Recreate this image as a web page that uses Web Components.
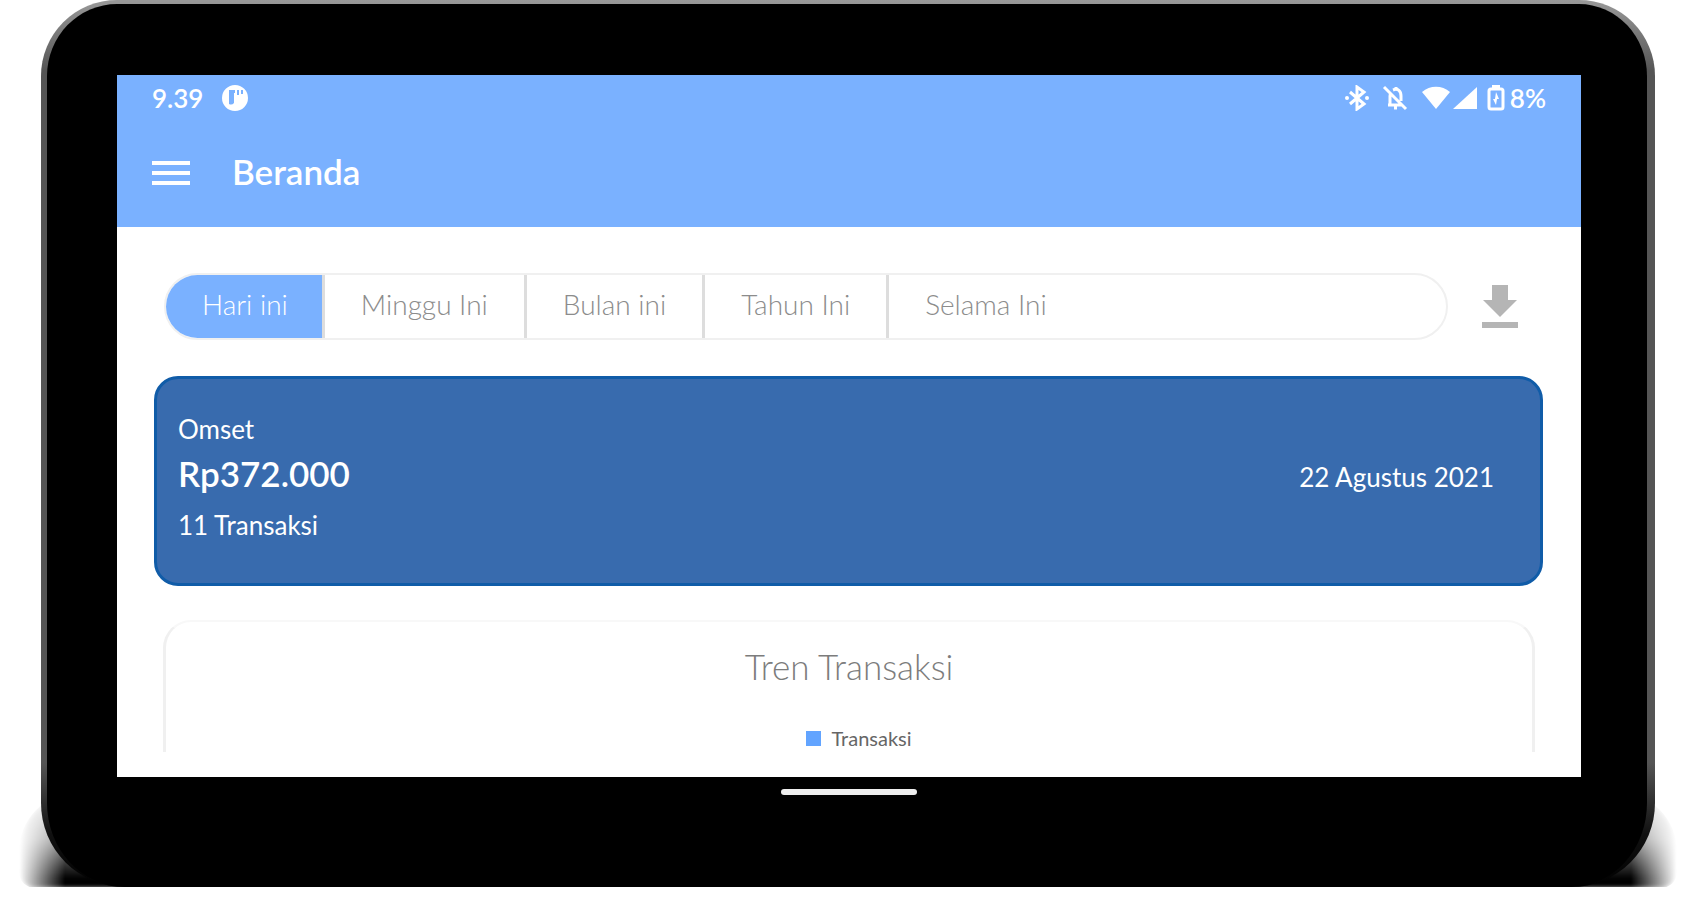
<!DOCTYPE html>
<html lang="id">
<head>
<meta charset="utf-8">
<meta name="viewport" content="width=device-width, initial-scale=1">
<title>Beranda</title>
<style>
  body {
    margin: 0;
    background: #fff;
    font-family: Lato, "Open Sans", sans-serif;
  }
</style>
</head>
<body>
<device-frame>
  <status-bar slot="header" time="9.39" battery="8%"></status-bar>
  <app-bar slot="header">Beranda</app-bar>
  <period-filter></period-filter>
  <revenue-card>
    <span slot="label">Omset</span>
    <span slot="amount">Rp372.000</span>
    <span slot="count">11 Transaksi</span>
    <span slot="date">22 Agustus 2021</span>
  </revenue-card>
  <trend-card>
    <span slot="title">Tren Transaksi</span>
    <span slot="legend">Transaksi</span>
  </trend-card>
</device-frame>

<script>
// Device body with the screen inside and the home indicator below it
class DeviceFrame extends HTMLElement {
  constructor() {
    super();
    this.attachShadow({ mode: 'open' }).innerHTML = `
      <style>
        :host {
          display: block;
          position: relative;
          z-index: 0;
          margin: 0 39px 0 41px;
        }

        /* shadow on the table, stronger near the bottom edge */
        :host::before {
          content: "";
          position: absolute;
          z-index: -1;
          left: -22px;
          right: -22px;
          bottom: -1px;
          height: 96px;
          border-radius: 60px 60px 16px 16px;
          background: linear-gradient(transparent, rgba(0, 0, 0, 0.4) 50%, #000 90%);
          filter: blur(2px);
          mask-image: linear-gradient(to right, transparent, #000 46px, #000 calc(100% - 46px), transparent);
        }

        .body {
          box-sizing: border-box;
          padding: 71px 66px 92px 70px;
          border: 4px solid transparent;
          border-width: 4px 8px 0 6px;
          border-radius: 76px 76px 84px 84px;
          background:
            linear-gradient(#000, #000) padding-box,
            linear-gradient(#999, #555 8%, #555 86%, #111 94%, #000) border-box;
        }

        .screen {
          background: #fff;
          height: 702px;
          overflow: hidden;
        }

        header {
          background: #7ab1ff;
          color: #fff;
        }

        main {
          padding: 46px 38px 0 37px;
        }

        .home {
          width: 136px;
          height: 6px;
          margin: 12px auto 0;
          border-radius: 3px;
          background: #eee;
        }
      </style>
      <div class="body">
        <div class="screen">
          <header><slot name="header"></slot></header>
          <main><slot></slot></main>
        </div>
        <div class="home"></div>
      </div>
    `;
  }
}

class StatusBar extends HTMLElement {
  constructor() {
    super();
    this.attachShadow({ mode: 'open' });
  }

  connectedCallback() {
    this.shadowRoot.innerHTML = `
      <style>
        :host {
          display: flex;
          align-items: center;
          height: 46px;
          padding: 0 35px;
          font-size: 26px;
          font-weight: 600;
        }

        svg {
          display: block;
          fill: currentColor;
        }

        .app {
          margin-left: 18px;
        }

        .icons {
          display: flex;
          align-items: center;
          margin-left: auto;
        }

        .bluetooth,
        .muted {
          margin-right: 13px;
        }

        .signal {
          margin: 0 10px 0 2px;
        }

        .battery {
          margin-right: 5px;
        }
      </style>
      <span>${this.getAttribute('time')}</span>
      <svg class="app" width="28" height="28" viewBox="0 0 28 28">
        <path fill-rule="evenodd" d="M14 1a13 13 0 1 0 0 26a13 13 0 0 0 0-26zM8 6h6v3h-1v10a4 4 0 0 1-5 1zM16 6h2v5h-2zM20 6h2v4h-2z"/>
      </svg>
      <div class="icons">
        <svg class="bluetooth" width="24" height="26" viewBox="0 0 24 26">
          <path d="M5 7l14 12-7 5V2l7 5L5 19" fill="none" stroke="currentColor" stroke-width="3"/>
          <circle cx="2" cy="13" r="2"/><circle cx="22" cy="13" r="2"/>
        </svg>
        <svg class="muted" width="26" height="26" viewBox="0 0 26 26">
          <path d="M2 2l22 22M6 20h14M8 19v-8c0-1 0-2 1-3M11 5c5-2 8 1 8 6v5M12 23h3M14 2v3" fill="none" stroke="currentColor" stroke-width="3"/>
        </svg>
        <svg width="30" height="26" viewBox="0 0 30 26">
          <path d="M1 7C9 0 21 0 29 7L15 24z"/>
        </svg>
        <svg class="signal" width="24" height="26" viewBox="0 0 24 26">
          <path d="M24 2v22H0z"/>
        </svg>
        <svg class="battery" width="18" height="26" viewBox="0 0 18 26">
          <path d="M6 3V1h6v2" stroke="currentColor" stroke-width="2"/>
          <rect x="2" y="4" width="14" height="20" rx="2" fill="none" stroke="currentColor" stroke-width="3"/>
          <path d="M9 7l3 7H10l-1 6-3-6h2z"/>
        </svg>
        <span>${this.getAttribute('battery')}</span>
      </div>
    `;
  }
}

class AppBar extends HTMLElement {
  constructor() {
    super();
    this.attachShadow({ mode: 'open' }).innerHTML = `
      <style>
        :host {
          display: flex;
          align-items: center;
          gap: 42px;
          box-sizing: border-box;
          height: 106px;
          padding: 0 35px 2px;
        }

        button {
          display: block;
          padding: 0;
          border: none;
          background: none;
          color: inherit;
        }

        svg {
          display: block;
        }

        h1 {
          margin: 0;
          padding-bottom: 4px;
          font-size: 35px;
          line-height: 44px;
          font-weight: 600;
        }
      </style>
      <button type="button" aria-label="Menu">
        <svg width="38" height="28" viewBox="0 0 38 28">
          <path d="M0 4h38M0 14h38M0 24h38" stroke="currentColor" stroke-width="4"/>
        </svg>
      </button>
      <h1><slot></slot></h1>
    `;
  }
}

class PeriodFilter extends HTMLElement {
  constructor() {
    super();
    this.periods = ['Hari ini', 'Minggu Ini', 'Bulan ini', 'Tahun Ini', 'Selama Ini'];
    this.active = 0;
    this.attachShadow({ mode: 'open' });
    this.render();
  }

  render() {
    const buttons = this.periods
      .map((name, i) => `<button type="button" aria-pressed="${i === this.active}">${name}</button>`)
      .join('');

    this.shadowRoot.innerHTML = `
      <style>
        :host {
          display: flex;
          align-items: center;
          gap: 34px;
          padding: 0 25px 0 10px;
        }

        button {
          border: none;
          background: none;
          font: inherit;
        }

        .periods {
          display: flex;
          flex: 1;
          box-sizing: border-box;
          height: 67px;
          border: 2px solid #f0f0f0;
          border-radius: 34px;
          overflow: hidden;
        }

        .periods button {
          padding: 0 36px 6px;
          border-right: 3px solid #ddd;
          font-size: 28px;
          font-weight: 300;
          color: #8c8c8c;
        }

        .periods button:last-child {
          flex: 1;
          border: none;
          text-align: left;
        }

        .periods button[aria-pressed="true"] {
          padding-right: 34px;
          background: #7ab1ff;
          color: #fff;
        }

        .download {
          padding: 0;
        }

        svg {
          display: block;
          fill: #b5b5b5;
        }
      </style>
      <div class="periods">${buttons}</div>
      <button class="download" type="button" aria-label="Unduh">
        <svg width="36" height="44" viewBox="0 0 36 44">
          <path d="M10 0h16v15h9L18 32 1 15h9zM0 37h36v6H0z"/>
        </svg>
      </button>
    `;

    this.shadowRoot.querySelectorAll('.periods button').forEach((button, i) => {
      button.addEventListener('click', () => {
        this.active = i;
        this.render();
      });
    });
  }
}

class RevenueCard extends HTMLElement {
  constructor() {
    super();
    this.attachShadow({ mode: 'open' }).innerHTML = `
      <style>
        :host {
          display: flex;
          align-items: center;
          justify-content: space-between;
          box-sizing: border-box;
          height: 210px;
          margin-top: 36px;
          padding: 0 46px 8px 21px;
          border: 3px solid #105ca8;
          border-radius: 24px;
          background: #386bae;
          color: #fff;
          font-size: 26px;
        }

        p {
          margin: 0;
          line-height: 40px;
        }

        .amount {
          margin: 2px 0 10px;
          font-size: 35px;
          line-height: 44px;
          font-weight: 600;
        }
      </style>
      <div>
        <p><slot name="label"></slot></p>
        <p class="amount"><slot name="amount"></slot></p>
        <p><slot name="count"></slot></p>
      </div>
      <p><slot name="date"></slot></p>
    `;
  }
}

class TrendCard extends HTMLElement {
  constructor() {
    super();
    this.attachShadow({ mode: 'open' }).innerHTML = `
      <style>
        :host {
          display: block;
          box-sizing: border-box;
          height: 132px;
          margin: 34px 8px 0 9px;
          padding-top: 24px;
          border: 3px solid #f0f0f0;
          border-top: 2px solid #f8f8f8;
          border-bottom: none;
          border-radius: 28px 28px 0 0;
          text-align: center;
        }

        h2 {
          margin: 0;
          color: #7c7c7c;
          font-size: 35px;
          line-height: 40px;
          font-weight: 300;
        }

        .legend {
          display: flex;
          align-items: center;
          justify-content: center;
          gap: 10px;
          margin: 40px 0 0 20px;
          color: #666;
          font-size: 20px;
          line-height: 24px;
        }

        .legend::before {
          content: "";
          width: 15px;
          height: 15px;
          background: #62a4ff;
        }
      </style>
      <h2><slot name="title"></slot></h2>
      <div class="legend"><slot name="legend"></slot></div>
    `;
  }
}

customElements.define('device-frame', DeviceFrame);
customElements.define('status-bar', StatusBar);
customElements.define('app-bar', AppBar);
customElements.define('period-filter', PeriodFilter);
customElements.define('revenue-card', RevenueCard);
customElements.define('trend-card', TrendCard);
</script>
</body>
</html>
